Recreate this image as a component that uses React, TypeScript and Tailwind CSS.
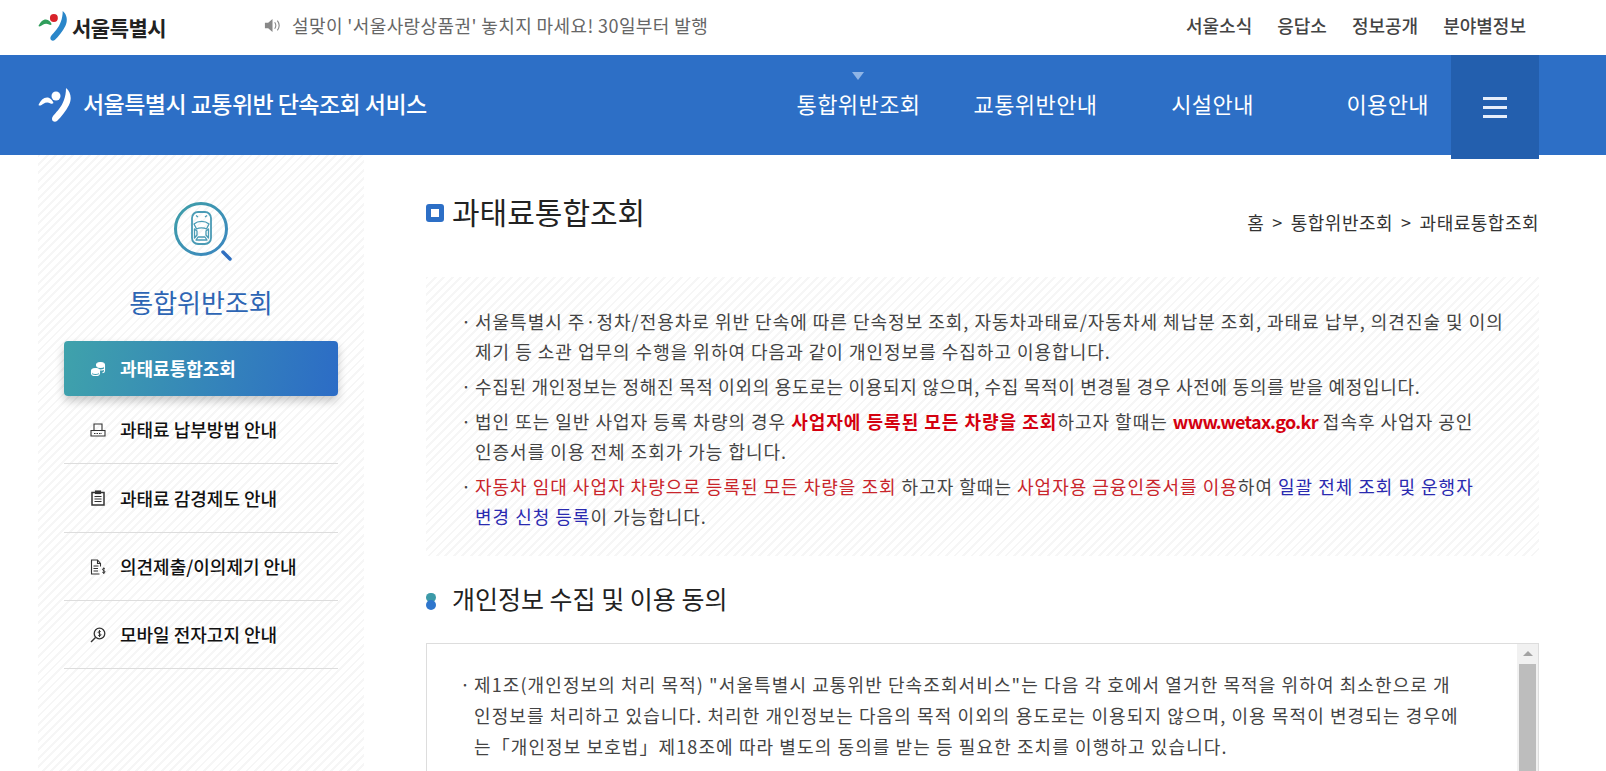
import React from "react";

const KR = "font-['Noto_Sans_CJK_KR','Noto_Sans',sans-serif]";
const STRIPES =
  "bg-[repeating-linear-gradient(135deg,#f6f6f6_0px,#f6f6f6_2px,#ffffff_2px,#ffffff_6px)]";

function SeoulMark({ mono, className }: { mono?: boolean; className: string }) {
  return (
    <svg viewBox="0 0 34 34" className={className}>
      <path
        d="M0.500 17C2.500 12.500 5.500 9.500 9 9.500c3 0 5.500 2.500 6.500 5.500-.8 1-2 1-3 .4C10 14 7.500 14.300 5.500 15.700 4 16.800 1.500 18.300 0.500 17z"
        fill={mono ? "#ffffff" : "#2f9e5b"}
      />
      <circle cx="18" cy="8" r="4.500" fill={mono ? "#ffffff" : "#d8232a"} />
      <path
        d="M28 0C33 4 34 11 31 17 28 23 23 29 19 33 17 34.500 14 33.500 14 31 14 28 18 25 21 21 25 16 28 9 28 0z"
        fill={mono ? "#ffffff" : "#2a86c9"}
      />
    </svg>
  );
}

function CarSearchIcon() {
  return (
    <svg viewBox="0 0 60 62" className="h-[62px] w-[60px]">
      <defs>
        <linearGradient id="carStroke" x1="0" y1="0" x2="1" y2="1">
          <stop offset="0" stopColor="#3f9fa8" />
          <stop offset="1" stopColor="#3b86c0" />
        </linearGradient>
      </defs>
      <circle cx="28" cy="28" r="25.500" fill="none" stroke="url(#carStroke)" strokeWidth="3" />
      <path d="M50 51l7 7" stroke="#2f6fc0" strokeWidth="3.500" strokeLinecap="round" />
      <g fill="none" stroke="#4a9bb5" strokeWidth="1.300" strokeLinejoin="round">
        <rect x="19" y="11" width="19" height="32" rx="6" strokeWidth="1.800" />
        <path d="M21 23C25 19.500 32 19.500 36 23L33.500 28C31 26.500 26 26.500 23.500 28z" />
        <path d="M21.500 28V37L24 34V30zM35.500 28V37L33 34V30z" />
        <path d="M23 39H34L32 36H25z" />
        <path d="M23 14.500l2 1.500M34 14.500l-2 1.500" />
      </g>
    </svg>
  );
}

function MenuIcon({ kind, active }: { kind: string; active?: boolean }) {
  const color = active ? "#ffffff" : "#333333";
  return (
    <svg viewBox="0 0 16 16" className="h-4 w-4 shrink-0" fill="none" stroke={color} strokeWidth="1.100">
      {kind === "coins" && (
        <>
          <ellipse cx="10.500" cy="4" rx="4" ry="2.500" fill={color} />
          <path d="M6.500 7c0 1.200 2 2 4 2s4-.8 4-2V4M14.500 7v3c0 .8-1 1.500-2 1.800" />
          <ellipse cx="5.500" cy="10" rx="4" ry="2.400" fill={color} />
          <path d="M1.500 10v2.500c0 1.200 1.800 2 4 2s4-.8 4-2V10" />
        </>
      )}
      {kind === "printer" && (
        <>
          <path d="M4 8V2h8v6" />
          <path d="M1 8.500h14v5.500H1z" />
          <path d="M4 11.500h8" strokeDasharray="1.500 1" />
        </>
      )}
      {kind === "clipboard" && (
        <>
          <rect x="2" y="2.500" width="12" height="12.500" strokeWidth="1.500" />
          <rect x="5.500" y="1" width="5" height="2.500" fill={color} />
          <path d="M4.500 6.500h7M4.500 9h7M4.500 11.500h7" />
        </>
      )}
      {kind === "document" && (
        <>
          <path d="M10.500 7.500V4.500L7.500 1H1.500v14h8" />
          <path d="M7.500 1v3.500h3M3.500 7h5M3.500 9.500h4.500M3.500 12h4.500" />
          <path d="M15 10c-.5-.8-2.500-.8-2.500.5s2.500 1 2.500 2.300-2 1.300-2.700.4M13.800 8.500v6.500" strokeWidth="1" />
        </>
      )}
      {kind === "search" && (
        <>
          <circle cx="9.500" cy="6.500" r="5.300" strokeWidth="1.300" />
          <path d="M5.500 10.500L1 15" strokeWidth="1.500" />
          <path d="M11 5c-.4-.8-2.800-.9-2.800.4S11 6.500 11 7.800 8.500 9 8 8M9.500 3v7" strokeWidth="1" />
        </>
      )}
    </svg>
  );
}

const sideItems = [
  { label: "과태료 납부방법 안내", icon: "printer" },
  { label: "과태료 감경제도 안내", icon: "clipboard" },
  { label: "의견제출/이의제기 안내", icon: "document" },
  { label: "모바일 전자고지 안내", icon: "search" },
];

function Bullet({ children }: { children: React.ReactNode }) {
  return (
    <li className="flex">
      <span className="w-[14px] shrink-0">·</span>
      <p className="whitespace-nowrap">{children}</p>
    </li>
  );
}

export default function App() {
  return (
    <div className={`${KR} h-[771px] w-[1606px] overflow-hidden bg-white`}>
      {/* top bar */}
      <header className="flex h-[55px] items-center pb-[5px] pl-[38px] pr-[80px]">
        <a className="flex w-[226px] items-center gap-[4px]">
          <SeoulMark className="mt-[2px] h-[32px] w-[30px]" />
          <span className="mt-[6px] text-[21px] font-bold tracking-[-0.5px] text-[#222]">서울특별시</span>
        </a>
        <svg viewBox="0 0 14 12" className="h-[13px] w-[17px] shrink-0" fill="#888888">
          <path d="M0 3.500h3L7 0v12L3 8.500H0z" />
          <path d="M9 3c1.300 1.800 1.300 4.200 0 6M11.500 1.500c2 2.700 2 6.300 0 9" fill="none" stroke="#888888" strokeWidth="1" />
        </svg>
        <p className="ml-[11px] text-[18px] tracking-[0.4px] text-[#666]">
          설맞이 '서울사랑상품권' 놓치지 마세요! 30일부터 발행
        </p>
        <nav className="ml-auto flex gap-[25px] text-[18px] font-medium text-[#444]">
          <a>서울소식</a>
          <a>응답소</a>
          <a>정보공개</a>
          <a>분야별정보</a>
        </nav>
      </header>

      {/* blue band */}
      <div className="flex h-[100px] items-start bg-[#2d6fc6] pl-[38px] pr-[67px] text-white">
        <div className="flex h-[100px] w-[732px] items-center gap-[11px]">
          <SeoulMark mono className="h-[34px] w-[34px]" />
          <h1 className="mb-[4px] text-[23px] font-medium tracking-[-0.55px]">서울특별시 교통위반 단속조회 서비스</h1>
        </div>
        <nav className="flex h-[100px] items-center pb-[4px] text-[22px] tracking-[0.4px]">
          <a className="relative w-[177px] text-center">
            통합위반조회
            <span className="absolute left-[82px] top-[-15px] h-0 w-0 border-x-[6px] border-t-[8px] border-x-transparent border-t-[#8fb5e6]" />
          </a>
          <a className="w-[177px] text-center">교통위반안내</a>
          <a className="w-[177px] text-center">시설안내</a>
          <a className="w-[150px] pr-[22px] text-right">이용안내</a>
        </nav>
        <button className="relative z-10 flex h-[104px] w-[88px] flex-col items-center justify-center gap-[6px] bg-[#235fae]">
          <span className="h-[3px] w-[24px] bg-[#e6eefa]" />
          <span className="h-[3px] w-[24px] bg-[#e6eefa]" />
          <span className="h-[3px] w-[24px] bg-[#e6eefa]" />
        </button>
      </div>

      <div className="flex gap-[62px] pl-[38px] pr-[67px]">
        {/* sidebar */}
        <aside className={`${STRIPES} h-[616px] w-[326px] shrink-0 px-[26px] pt-[46px]`}>
          <div className="flex justify-center pl-[4px]">
            <CarSearchIcon />
          </div>
          <h2 className="mt-[20px] text-center text-[26px] leading-[38px] text-[#2d65b4]">통합위반조회</h2>
          <ul className="mt-[20px]">
            <li className="flex h-[55px] items-center gap-[14px] rounded-[4px] bg-[linear-gradient(100deg,#3fa2ab,#2c6cc6)] pl-[26px] text-[18px] font-bold text-white shadow-[0_5px_10px_rgba(0,0,0,0.22)]">
              <MenuIcon kind="coins" active />
              과태료통합조회
            </li>
            {sideItems.map((item, i) => (
              <li
                key={item.label}
                className={`flex items-center gap-[14px] border-b border-[#dddddd] pl-[26px] text-[18px] font-medium text-[#111] ${i === 1 ? "h-[69px]" : "h-[68px]"}`}
              >
                <MenuIcon kind={item.icon} />
                {item.label}
              </li>
            ))}
          </ul>
        </aside>

        {/* main */}
        <main className="min-w-0 flex-1 pt-[38px]">
          <div className="flex h-[40px] items-center justify-between">
            <div className="flex items-center gap-[8px]">
              <span className="flex h-[18px] w-[18px] items-center justify-center rounded-[3px] bg-[#2d6fc6]">
                <span className="h-[8px] w-[8px] bg-white" />
              </span>
              <h2 className="mb-[4px] text-[30px] leading-[40px] text-[#222]">과태료통합조회</h2>
            </div>
            <p className="mt-[18px] flex gap-[8px] text-[18px] tracking-[0.5px] text-[#333]">
              <span>홈</span>
              <span>&gt;</span>
              <span>통합위반조회</span>
              <span>&gt;</span>
              <span>과태료통합조회</span>
            </p>
          </div>

          <ul className={`${STRIPES} mt-[44px] h-[279px] space-y-[5px] pl-[35px] pt-[29px] text-[18px] leading-[30px] tracking-[1px] text-[#444]`}>
            <Bullet>
              서울특별시 주·정차/전용차로 위반 단속에 따른 단속정보 조회, 자동차과태료/자동차세 체납분 조회, 과태료 납부, 의견진술 및 이의
              <br />
              제기 등 소관 업무의 수행을 위하여 다음과 같이 개인정보를 수집하고 이용합니다.
            </Bullet>
            <Bullet>
              <span className="tracking-[0.7px]">
                수집된 개인정보는 정해진 목적 이외의 용도로는 이용되지 않으며, 수집 목적이 변경될 경우 사전에 동의를 받을 예정입니다.
              </span>
            </Bullet>
            <Bullet>
              법인 또는 일반 사업자 등록 차량의 경우 <b className="text-[#d4000f]">사업자에 등록된 모든 차량을 조회</b>하고자 할때는{" "}
              <b className="tracking-[-0.7px] text-[#d4000f]">www.wetax.go.kr</b> 접속후 사업자 공인
              <br />
              인증서를 이용 전체 조회가 가능 합니다.
            </Bullet>
            <Bullet>
              <span className="text-[#c9252b]">자동차 임대 사업자 차량으로 등록된 모든 차량을 조회</span> 하고자 할때는{" "}
              <span className="text-[#c9252b]">사업자용 금융인증서를 이용</span>하여{" "}
              <span className="text-[#2a2ab0]">일괄 전체 조회 및 운행자</span>
              <br />
              <span className="text-[#2a2ab0]">변경 신청 등록</span>이 가능합니다.
            </Bullet>
          </ul>

          <div className="mt-[28px] flex h-[34px] items-center gap-[15px]">
            <span className="flex w-[11px] flex-col">
              <span className="h-[9px] w-[10px] rounded-full bg-[#3c9aa8]" />
              <span className="-mt-[2px] h-[10px] w-[10px] rounded-full bg-[#2f76cc]" />
            </span>
            <h3 className="mb-[4px] text-[25px] font-normal text-[#222]">개인정보 수집 및 이용 동의</h3>
          </div>

          <div className="mt-[25px] flex h-[200px] border border-[#dddddd]">
            <ul className="min-w-0 flex-1 pl-[33px] pt-[25px] text-[18px] leading-[31px] tracking-[1.1px] text-[#444]">
              <li className="flex">
                <span className="w-[14px] shrink-0">·</span>
                <p className="whitespace-nowrap">
                  제1조(개인정보의 처리 목적) "서울특별시 교통위반 단속조회서비스"는 다음 각 호에서 열거한 목적을 위하여 최소한으로 개
                  <br />
                  인정보를 처리하고 있습니다. 처리한 개인정보는 다음의 목적 이외의 용도로는 이용되지 않으며, 이용 목적이 변경되는 경우에
                  <br />
                  는「개인정보 보호법」제18조에 따라 별도의 동의를 받는 등 필요한 조치를 이행하고 있습니다.
                </p>
              </li>
            </ul>
            <div className="flex w-[21px] shrink-0 flex-col items-center bg-[#f1f1f1]">
              <span className="mt-[7px] h-0 w-0 border-x-[5px] border-b-[5px] border-x-transparent border-b-[#a3a3a3]" />
              <span className="mt-[8px] h-full w-[17px] bg-[#bdbdbd]" />
            </div>
          </div>
        </main>
      </div>
    </div>
  );
}
